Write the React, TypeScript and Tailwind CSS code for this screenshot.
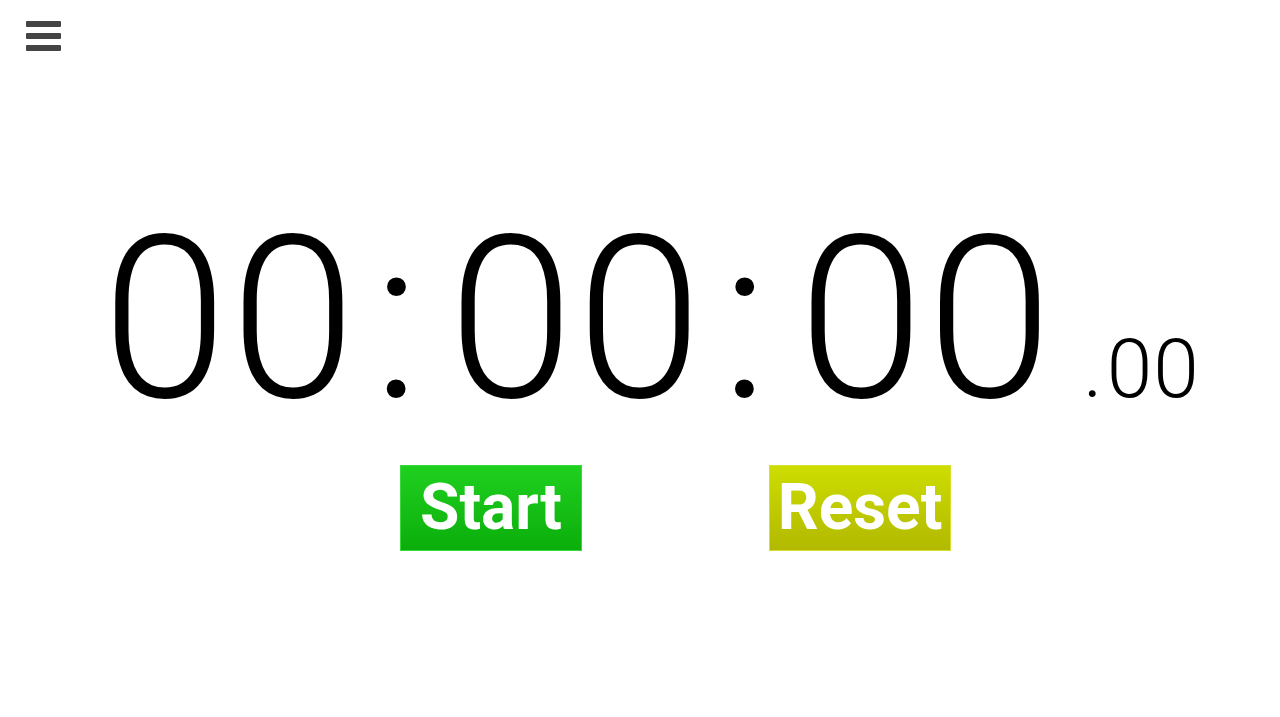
export default function App() {
  const font = { fontFamily: 'Roboto, "Noto Sans", sans-serif' };

  return (
    <div className="flex h-[717px] w-[1280px] flex-col bg-white" style={font}>
      <div className="flex px-[26px] pt-[21px]">
        <button className="flex w-[35px] flex-col gap-[6px]" aria-label="Menu">
          <span className="h-[6px] w-full rounded-[1px] bg-[#444]" />
          <span className="h-[6px] w-full rounded-[1px] bg-[#444]" />
          <span className="h-[6px] w-full rounded-[1px] bg-[#444]" />
        </button>
      </div>

      <div className="mt-[156px] flex items-baseline pl-[102px] font-light leading-none text-black">
        <span className="text-[226px] tracking-[3px]">00</span>
        <span className="ml-[14px] mr-[28px] text-[226px]">:</span>
        <span className="text-[226px] tracking-[3px]">00</span>
        <span className="ml-[16px] mr-[30px] text-[226px]">:</span>
        <span className="text-[226px] tracking-[3px]">00</span>
        <span className="ml-[28px] text-[82px]">
          .<span className="ml-[4px] tracking-[1px]">00</span>
        </span>
      </div>

      <div className="mt-[32px] flex pl-[400px]">
        <button className="flex h-[86px] w-[182px] items-center justify-center border border-[#3ad83a] bg-gradient-to-b from-[#1fd01f] to-[#0aae0a] text-[64px] font-bold text-white">
          Start
        </button>
        <button className="ml-[187px] flex h-[86px] w-[182px] items-center justify-center border border-[#d6e030] bg-gradient-to-b from-[#cddd00] to-[#b2b900] text-[64px] font-bold text-white">
          Reset
        </button>
      </div>
    </div>
  );
}
